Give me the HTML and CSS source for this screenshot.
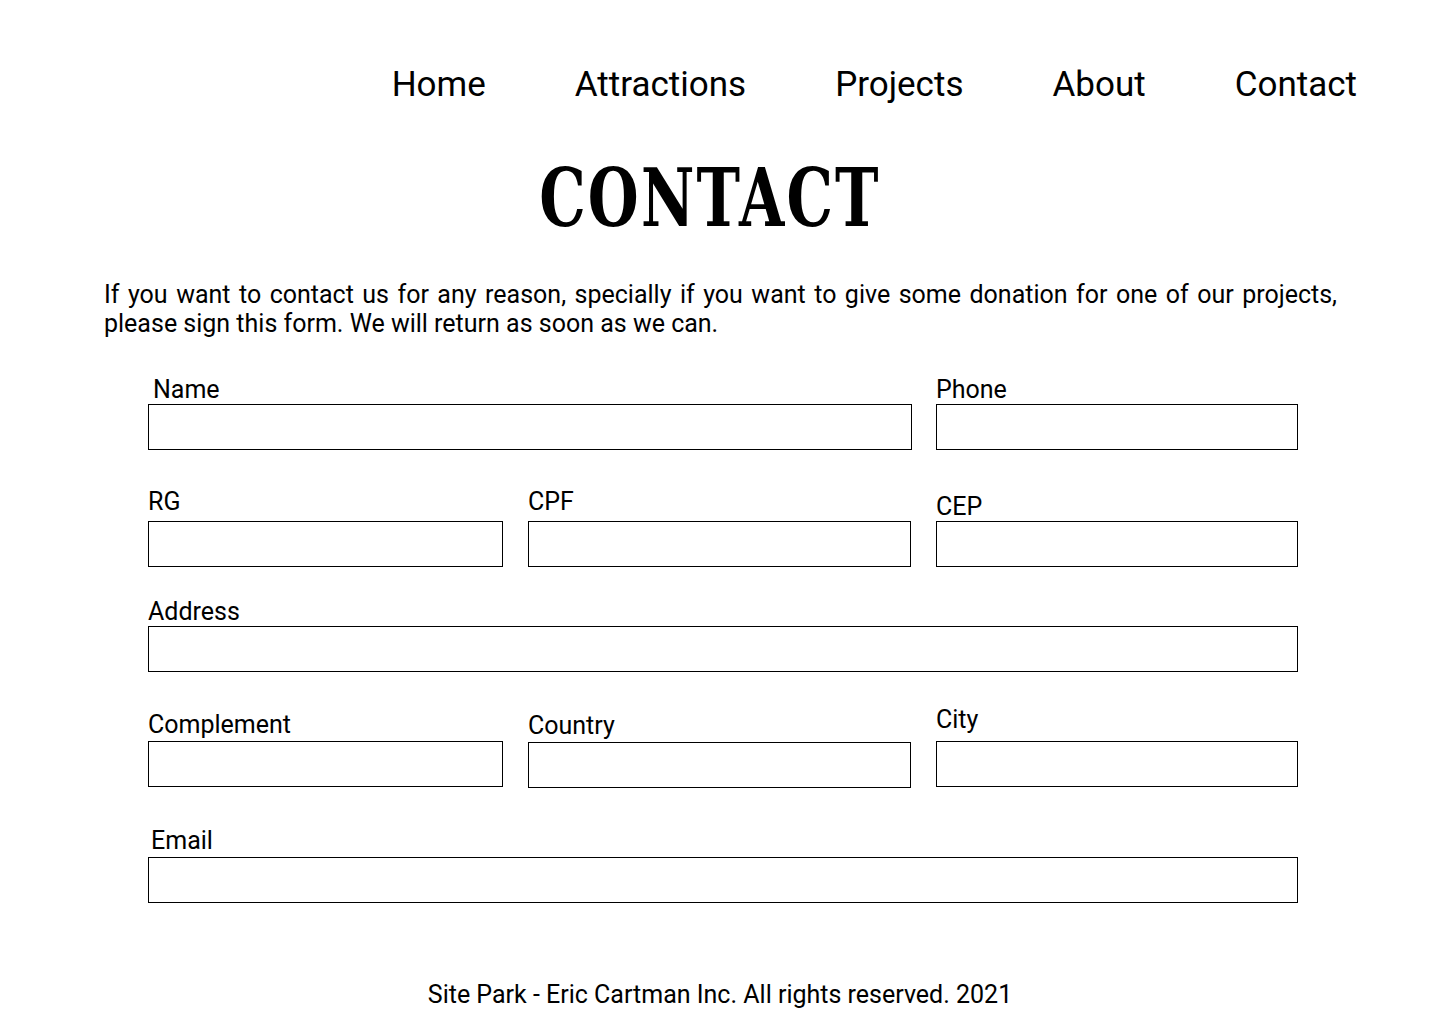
FILE: index.html
```html
<!DOCTYPE html>
<html lang="en">
<head>
<meta charset="utf-8">
<title>Contact - Site Park</title>
<link rel="stylesheet" href="styles.css">
</head>
<body>
<header class="topbar">
  <nav class="nav">
    <a class="nav-link" href="#">Home</a>
    <a class="nav-link" href="#">Attractions</a>
    <a class="nav-link" href="#">Projects</a>
    <a class="nav-link" href="#">About</a>
    <a class="nav-link" href="#">Contact</a>
  </nav>
</header>
<main class="main">
  <h1 class="title"><span class="title-text">CONTACT</span></h1>
  <p class="intro">If you want to contact us for any reason, specially if you want to give some donation for one of our projects, please sign this form. We will return as soon as we can.</p>
  <form class="form">
    <div class="row row-1">
      <div class="field f-name"><label class="label">Name</label><input class="input" type="text"></div>
      <div class="field f-phone"><label class="label">Phone</label><input class="input" type="text"></div>
    </div>
    <div class="row row-2">
      <div class="field f-rg"><label class="label">RG</label><input class="input" type="text"></div>
      <div class="field f-cpf"><label class="label">CPF</label><input class="input" type="text"></div>
      <div class="field f-cep"><label class="label">CEP</label><input class="input" type="text"></div>
    </div>
    <div class="row row-3">
      <div class="field f-address"><label class="label">Address</label><input class="input" type="text"></div>
    </div>
    <div class="row row-4">
      <div class="field f-complement"><label class="label">Complement</label><input class="input" type="text"></div>
      <div class="field f-country"><label class="label">Country</label><input class="input" type="text"></div>
      <div class="field f-city"><label class="label">City</label><input class="input" type="text"></div>
    </div>
    <div class="row row-5">
      <div class="field f-email"><label class="label">Email</label><input class="input" type="text"></div>
    </div>
  </form>
</main>
<footer class="footer">Site Park - Eric Cartman Inc. All rights reserved. 2021</footer>
</body>
</html>
```
FILE: styles.css
```css
* { box-sizing: border-box; }
html, body { margin: 0; padding: 0; background: #fff; }
body {
  font-family: Roboto, "Liberation Sans", sans-serif;
  color: #000;
  width: 1440px;
}
.topbar { padding: 64px 83px 0 0; }
.nav {
  display: flex;
  justify-content: flex-end;
  gap: 89px;
}
.nav-link {
  font-size: 35px;
  color: #000;
  text-decoration: none;
  line-height: normal;
}
.title {
  margin: 53px 0 0 0;
  text-align: center;
  font-family: "DejaVu Serif", serif;
  font-weight: bold;
  font-size: 80px;
  line-height: 80px;
  height: 80px;
  padding-right: 20px;
}
.title-text {
  display: inline-block;
  letter-spacing: 3px;
  transform: scaleX(0.73);
}
.intro {
  margin: 42px 0 0 104px;
  width: 1233px;
  font-size: 25px;
  line-height: 29px;
  text-align: justify;
}
.form {
  margin: 38px 0 0 148px;
  width: 1150px;
}
.row {
  display: flex;
  justify-content: space-between;
  align-items: flex-end;
}
.row-2 { margin-top: 38px; }
.row-3 { margin-top: 31px; }
.row-4 { margin-top: 34px; }
.row-5 { margin-top: 40px; }
.field { display: flex; flex-direction: column; }
.label {
  font-size: 25px;
  line-height: 28px;
}
.input {
  height: 46px;
  border: 1px solid #000;
  border-radius: 0;
  background: #fff;
  width: 100%;
  font: inherit;
  padding: 0 8px;
}
.f-name { width: 764px; }
.f-name .label { padding-left: 5px; }
.f-phone { width: 362px; }
.f-rg, .f-complement { width: 355px; }
.f-cpf, .f-country { width: 383px; }
.f-cep, .f-city { width: 362px; }
.f-address, .f-email { width: 1150px; }
.f-rg .label, .f-cpf .label { margin-bottom: 5px; }
.f-city .label { margin-bottom: 7px; }
.f-complement .label { margin-bottom: 2px; }
.f-country .label { margin-bottom: 2px; }
.f-country .input { margin-bottom: -1px; }
.f-email .label { margin-bottom: 2px; padding-left: 3px; }
.footer {
  margin-top: 77px;
  text-align: center;
  font-size: 25px;
  line-height: 29px;
}
```
